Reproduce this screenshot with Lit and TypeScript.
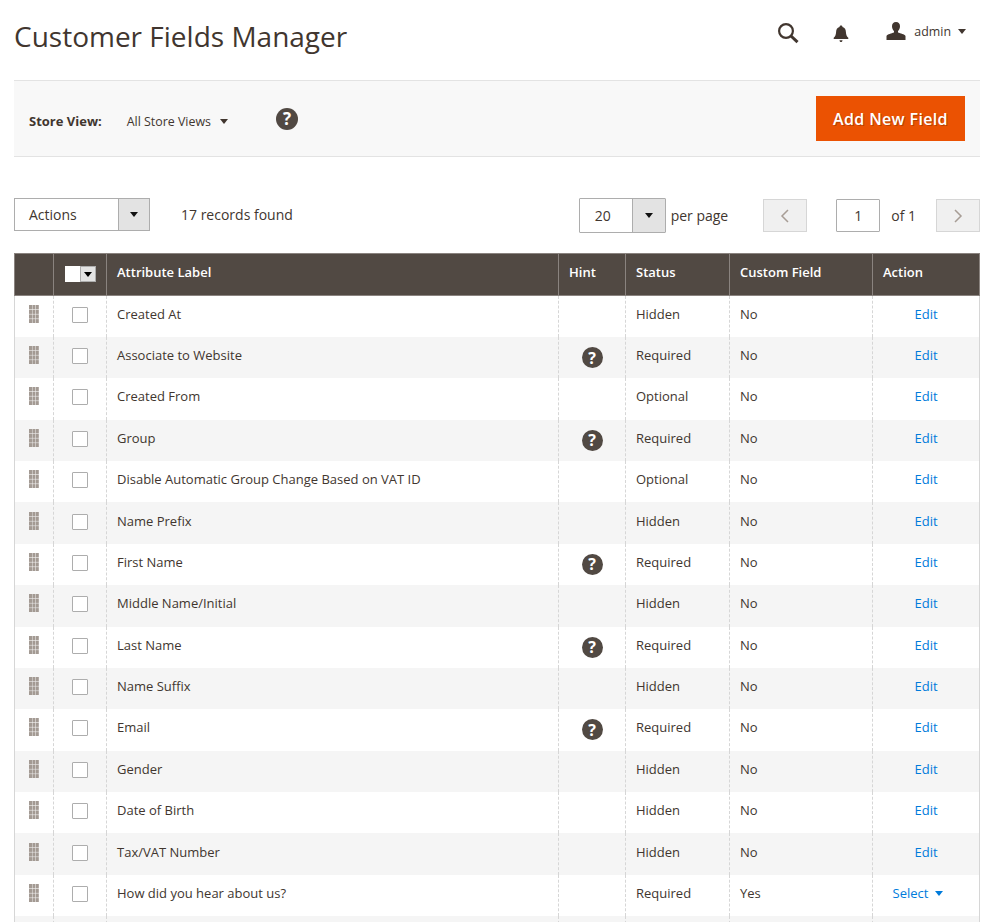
import { LitElement, html, css, svg } from 'lit';
import { customElement } from 'lit/decorators.js';

interface Row {
  label: string;
  status: string;
  custom: string;
  hint?: boolean;
  select?: boolean;
}

const ROWS: Row[] = [
  { label: 'Created At', status: 'Hidden', custom: 'No' },
  { label: 'Associate to Website', status: 'Required', custom: 'No', hint: true },
  { label: 'Created From', status: 'Optional', custom: 'No' },
  { label: 'Group', status: 'Required', custom: 'No', hint: true },
  { label: 'Disable Automatic Group Change Based on VAT ID', status: 'Optional', custom: 'No' },
  { label: 'Name Prefix', status: 'Hidden', custom: 'No' },
  { label: 'First Name', status: 'Required', custom: 'No', hint: true },
  { label: 'Middle Name/Initial', status: 'Hidden', custom: 'No' },
  { label: 'Last Name', status: 'Required', custom: 'No', hint: true },
  { label: 'Name Suffix', status: 'Hidden', custom: 'No' },
  { label: 'Email', status: 'Required', custom: 'No', hint: true },
  { label: 'Gender', status: 'Hidden', custom: 'No' },
  { label: 'Date of Birth', status: 'Hidden', custom: 'No' },
  { label: 'Tax/VAT Number', status: 'Hidden', custom: 'No' },
  { label: 'How did you hear about us?', status: 'Required', custom: 'Yes', select: true },
];

const grip = svg`<svg class="grip" width="10" height="18" viewBox="0 0 10 18">
  ${[0, 1, 2].map((c) =>
    [0, 1, 2, 3].map(
      (r) => svg`<rect x=${c * 3.4} y=${r * 4.7} width="3" height="4.2" fill="#a39a93"></rect>`
    )
  )}
</svg>`;

@customElement('app-root')
export class AppRoot extends LitElement {
  static styles = css`
    :host {
      display: block;
      height: 922px;
      overflow: hidden;
      background: #fff;
      color: #41362f;
      font-family: 'Open Sans', sans-serif;
      font-size: 13px;
    }

    .page {
      padding: 0 14px;
    }

    .top {
      display: flex;
      align-items: center;
      height: 80px;
      border-bottom: 1px solid #e3e3e3;
    }

    h1 {
      flex: 1;
      margin: 0;
      font-size: 28px;
      font-weight: 400;
      line-height: 72px;
      color: #41362f;
      padding-bottom: 8px;
    }

    .top-search {
      display: block;
      margin-right: 34px;
      margin-top: -14px;
    }

    .top-bell {
      display: block;
      margin-right: 37px;
      margin-top: -12px;
    }

    .user {
      display: flex;
      align-items: center;
      margin-right: 14px;
      margin-top: -18px;
      color: #41362f;
      font-size: 12.4px;
    }

    .user svg {
      margin-right: 8px;
      margin-top: -1px;
    }

    .caret {
      display: inline-block;
      width: 0;
      height: 0;
      border-left: 4px solid transparent;
      border-right: 4px solid transparent;
      border-top: 5px solid #41362f;
    }

    .user .caret {
      margin-left: 7px;
    }

    .toolbar {
      display: flex;
      align-items: center;
      height: 75px;
      padding: 0 15px;
      background: #f8f8f8;
      border-bottom: 1px solid #e3e3e3;
    }

    .store-label {
      margin-top: 4px;
      font-weight: 700;
      margin-right: 25px;
    }

    .store-name {
      margin-top: 5px;
      font-size: 12.4px;
    }

    .store-caret {
      margin-top: 6px;
      margin-left: 9px;
    }

    .help {
      display: inline-flex;
      align-items: center;
      justify-content: center;
      width: 22px;
      height: 22px;
      border-radius: 50%;
      background: #514943;
      color: #fff;
      font-size: 17px;
      font-weight: 700;
      line-height: 1;
    }

    .toolbar .help {
      margin-left: 48px;
    }

    .add {
      margin-left: auto;
      height: 45px;
      width: 149px;
      border: 0;
      background: #eb5202;
      color: #fff;
      font-family: inherit;
      font-size: 16px;
      font-weight: 600;
      letter-spacing: 0.35px;
      text-shadow: 1px 1px 0 #b84002;
    }

    .controls {
      display: flex;
      align-items: center;
      height: 33px;
      margin-top: 41px;
      margin-bottom: 22px;
      font-size: 14px;
    }

    .actions {
      display: flex;
      box-sizing: border-box;
      width: 136px;
      height: 33px;
      border: 1px solid #adadad;
      align-items: center;
    }

    .select-value {
      flex: 1;
      padding-left: 14px;
    }

    .drop {
      display: flex;
      align-items: center;
      justify-content: center;
      width: 31px;
      height: 100%;
      background: #e3e3e3;
      border-left: 1px solid #adadad;
      box-sizing: border-box;
    }

    .drop .caret {
      border-top-color: #111;
    }

    .records {
      margin-left: 31px;
    }

    .paging {
      display: flex;
      align-items: center;
      margin-left: auto;
      margin-top: 2px;
    }

    .per-page {
      display: flex;
      align-items: center;
      box-sizing: border-box;
      width: 87px;
      height: 35px;
      border: 1px solid #adadad;
      border-radius: 1px;
    }

    .per-page .select-value {
      padding-left: 15px;
    }

    .per-page .drop {
      width: 33px;
    }

    .per-label {
      margin-left: 5px;
      margin-right: 35px;
    }

    .pager {
      display: flex;
      align-items: center;
      justify-content: center;
      box-sizing: border-box;
      width: 44px;
      height: 33px;
      border: 1px solid #d6d6d6;
      background: #f0f0f0;
    }

    .page-num {
      display: flex;
      align-items: center;
      justify-content: center;
      box-sizing: border-box;
      width: 44px;
      height: 33px;
      margin-left: 29px;
      border: 1px solid #adadad;
      border-radius: 1px;
    }

    .of {
      margin: 0 20px 0 11px;
    }

    table {
      width: 965px;
      table-layout: fixed;
      border-collapse: collapse;
      font-size: 13px;
    }

    th {
      height: 42px;
      box-sizing: border-box;
      padding: 0 10px 5px;
      background: #514943;
      border: 1px solid #8a837f;
      color: #fff;
      font-weight: 600;
      text-align: left;
    }

    td {
      height: 41.39px;
      box-sizing: border-box;
      padding: 0 10px 5px;
      border-left: 1px dashed #d6d6d6;
      border-right: 1px dashed #d6d6d6;
    }

    td:first-child {
      border-left: 1px solid #d6d6d6;
    }

    td:last-child {
      border-right: 1px solid #d6d6d6;
    }

    tr:nth-child(even) td {
      background: #f5f5f5;
    }

    .grip {
      display: block;
      margin: 0 auto;
    }

    td.drag {
      padding: 0 0 5px;
    }

    td.check {
      padding: 0 0 3px;
    }

    .box {
      display: block;
      box-sizing: border-box;
      width: 16px;
      height: 16px;
      margin: 0 auto;
      background: #fff;
      border: 1px solid #adadad;
      border-radius: 1px;
    }

    th.head-cell {
      padding: 0 0 1px;
    }

    .head-check {
      display: flex;
      width: 31px;
      height: 16px;
      margin: 0 auto;
    }

    .head-check i {
      display: block;
      width: 15px;
      background: #fff;
    }

    .head-check b {
      display: flex;
      align-items: center;
      justify-content: center;
      box-sizing: border-box;
      width: 16px;
      background: #e3e3e3;
      border: 1px solid #adadad;
    }

    .head-check .caret {
      border-top-color: #000;
    }

    td.hint {
      padding: 0;
      text-align: center;
    }

    td.hint .help {
      width: 21px;
      height: 21px;
      font-size: 16px;
      vertical-align: middle;
    }

    td.action {
      color: #007bdb;
      text-align: center;
    }

    .select-action {
      margin-right: 16px;
    }

    .select-caret {
      margin-left: 7px;
      border-top-color: #007bdb;
      vertical-align: 2px;
    }
  `;

  private renderRow(row: Row) {
    return html`
      <tr>
        <td class="drag">${grip}</td>
        <td class="check"><span class="box"></span></td>
        <td>${row.label}</td>
        <td class="hint">${row.hint ? html`<span class="help">?</span>` : ''}</td>
        <td>${row.status}</td>
        <td>${row.custom}</td>
        <td class="action">
          ${row.select
            ? html`<span class="select-action">Select<span class="caret select-caret"></span></span>`
            : 'Edit'}
        </td>
      </tr>
    `;
  }

  render() {
    return html`
      <div class="page">
        <header class="top">
          <h1>Customer Fields Manager</h1>
          <svg class="top-search" width="22" height="22" viewBox="0 0 22 22" fill="none" stroke="#41362f">
            <circle cx="9" cy="9" r="6.9" stroke-width="2.2"></circle>
            <path d="M14 14l6.5 6.2" stroke-width="3"></path>
          </svg>
          <svg class="top-bell" width="16" height="18" viewBox="0 0 16 18" fill="#41362f">
            <path d="M8 0.5c1 0 1.5 .7 1.5 1.4 2.4 .7 3.3 2.6 3.4 5 .1 2.7 .9 4.4 2.4 5.9v1.2H.7v-1.200c1.500-1.500 2.300-3.200 2.400-5.900.1-2.400 1-4.300 3.400-5C6.500 1.200 7 .5 8 .5z"></path>
            <path d="M6.500 15.300h3c0 1-.6 1.800-1.500 1.800s-1.500-.8-1.500-1.800z"></path>
          </svg>
          <div class="user">
            <svg width="20" height="18" viewBox="0 0 20 18" fill="#41362f">
              <path d="M10 0c2.600 0 4 1.800 4 4.300 0 2-.9 3.800-2 4.800v1.500c2.500 1 6.500 1.700 7.500 3.500V18H.5v-3.900c1-1.800 5-2.500 7.500-3.500V9.100c-1.100-1-2-2.800-2-4.800C6 1.800 7.400 0 10 0z"></path>
            </svg>
            admin<span class="caret"></span>
          </div>
        </header>

        <div class="toolbar">
          <span class="store-label">Store View:</span>
          <span class="store-name">All Store Views</span>
          <span class="caret store-caret"></span>
          <span class="help">?</span>
          <button class="add">Add New Field</button>
        </div>

        <div class="controls">
          <div class="actions">
            <span class="select-value">Actions</span>
            <span class="drop"><span class="caret"></span></span>
          </div>
          <span class="records">17 records found</span>
          <div class="paging">
            <div class="per-page">
              <span class="select-value">20</span>
              <span class="drop"><span class="caret"></span></span>
            </div>
            <span class="per-label">per page</span>
            <span class="pager">
              <svg width="10" height="14" viewBox="0 0 10 14" fill="none" stroke="#a79d95" stroke-width="1.500">
                <path d="M8 1L2 7l6 6"></path>
              </svg>
            </span>
            <span class="page-num">1</span>
            <span class="of">of 1</span>
            <span class="pager">
              <svg width="10" height="14" viewBox="0 0 10 14" fill="none" stroke="#a79d95" stroke-width="1.500">
                <path d="M2 1l6 6-6 6"></path>
              </svg>
            </span>
          </div>
        </div>

        <table>
          <colgroup>
            <col style="width:39px" />
            <col style="width:53px" />
            <col style="width:452px" />
            <col style="width:67px" />
            <col style="width:104px" />
            <col style="width:143px" />
            <col style="width:107px" />
          </colgroup>
          <thead>
            <tr>
              <th></th>
              <th class="head-cell">
                <div class="head-check"><i></i><b><span class="caret"></span></b></div>
              </th>
              <th>Attribute Label</th>
              <th>Hint</th>
              <th>Status</th>
              <th>Custom Field</th>
              <th>Action</th>
            </tr>
          </thead>
          <tbody>
            ${ROWS.map((row) => this.renderRow(row))}
            <tr><td></td><td></td><td></td><td></td><td></td><td></td><td></td></tr>
          </tbody>
        </table>
      </div>
    `;
  }
}
